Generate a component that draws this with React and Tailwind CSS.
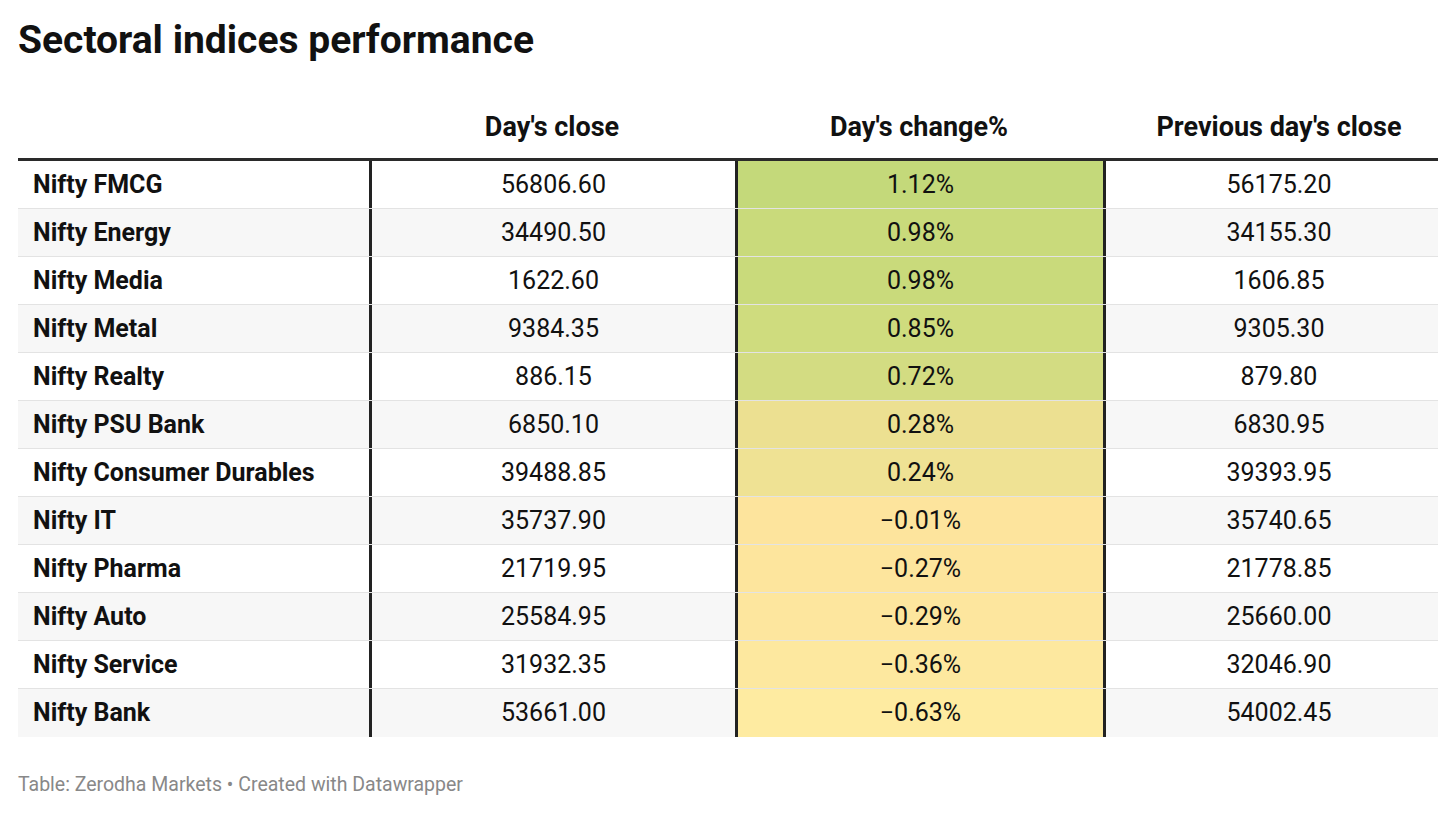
const rows = [
  { name: 'Nifty FMCG', close: '56806.60', change: '1.12%', prev: '56175.20', bg: 'bg-[#c4d97a]' },
  { name: 'Nifty Energy', close: '34490.50', change: '0.98%', prev: '34155.30', bg: 'bg-[#c9da7b]' },
  { name: 'Nifty Media', close: '1622.60', change: '0.98%', prev: '1606.85', bg: 'bg-[#c9da7b]' },
  { name: 'Nifty Metal', close: '9384.35', change: '0.85%', prev: '9305.30', bg: 'bg-[#cfdc7e]' },
  { name: 'Nifty Realty', close: '886.15', change: '0.72%', prev: '879.80', bg: 'bg-[#d3dc82]' },
  { name: 'Nifty PSU Bank', close: '6850.10', change: '0.28%', prev: '6830.95', bg: 'bg-[#ece091]' },
  { name: 'Nifty Consumer Durables', close: '39488.85', change: '0.24%', prev: '39393.95', bg: 'bg-[#efe294]' },
  { name: 'Nifty IT', close: '35737.90', change: '\u22120.01%', prev: '35740.65', bg: 'bg-[#fde49d]' },
  { name: 'Nifty Pharma', close: '21719.95', change: '\u22120.27%', prev: '21778.85', bg: 'bg-[#fde59d]' },
  { name: 'Nifty Auto', close: '25584.95', change: '\u22120.29%', prev: '25660.00', bg: 'bg-[#fde69e]' },
  { name: 'Nifty Service', close: '31932.35', change: '\u22120.36%', prev: '32046.90', bg: 'bg-[#fde89f]' },
  { name: 'Nifty Bank', close: '53661.00', change: '\u22120.63%', prev: '54002.45', bg: 'bg-[#feeba1]' },
];

export default function App() {
  return (
    <div className="w-[1456px] h-[813px] bg-white px-[18px] pt-[17px] text-[#111] font-['Roboto',sans-serif]">
      <h1 className="text-[39px] leading-[46px] font-bold">Sectoral indices performance</h1>

      {/* Header */}
      <div className="grid grid-cols-[351px_366px_368px_1fr] h-[98px] border-b-[3px] border-[#2a2a2a] text-[27px] leading-[32px] font-bold">
        <div />
        <div className="flex items-end justify-center pb-[15px]">Day's close</div>
        <div className="flex items-end justify-center pb-[15px]">Day's change%</div>
        <div className="flex items-end justify-center pb-[15px] pl-[17px]">Previous day's close</div>
      </div>

      {/* Body */}
      <div className="text-[25px] leading-[30px]">
        {rows.map((r, i) => (
          <div
            key={r.name}
            className={`grid grid-cols-[351px_366px_368px_1fr] h-[48px] ${i % 2 === 1 ? 'bg-[#f7f7f7]' : 'bg-white'} ${i < rows.length - 1 ? 'border-b border-[#e3e3e3]' : ''}`}
          >
            <div className="flex items-center pl-[15px] font-bold">{r.name}</div>
            <div className="flex items-center justify-center border-l-[3px] border-[#222]">{r.close}</div>
            <div className={`flex items-center justify-center border-l-[3px] border-[#222] ${r.bg}`}>{r.change}</div>
            <div className="flex items-center justify-center border-l-[3px] border-[#222] pl-[14px]">{r.prev}</div>
          </div>
        ))}
      </div>

      <p className="mt-[35px] text-[19.5px] leading-[26px] text-[#888]">
        Table: Zerodha Markets • Created with Datawrapper
      </p>
    </div>
  );
}
